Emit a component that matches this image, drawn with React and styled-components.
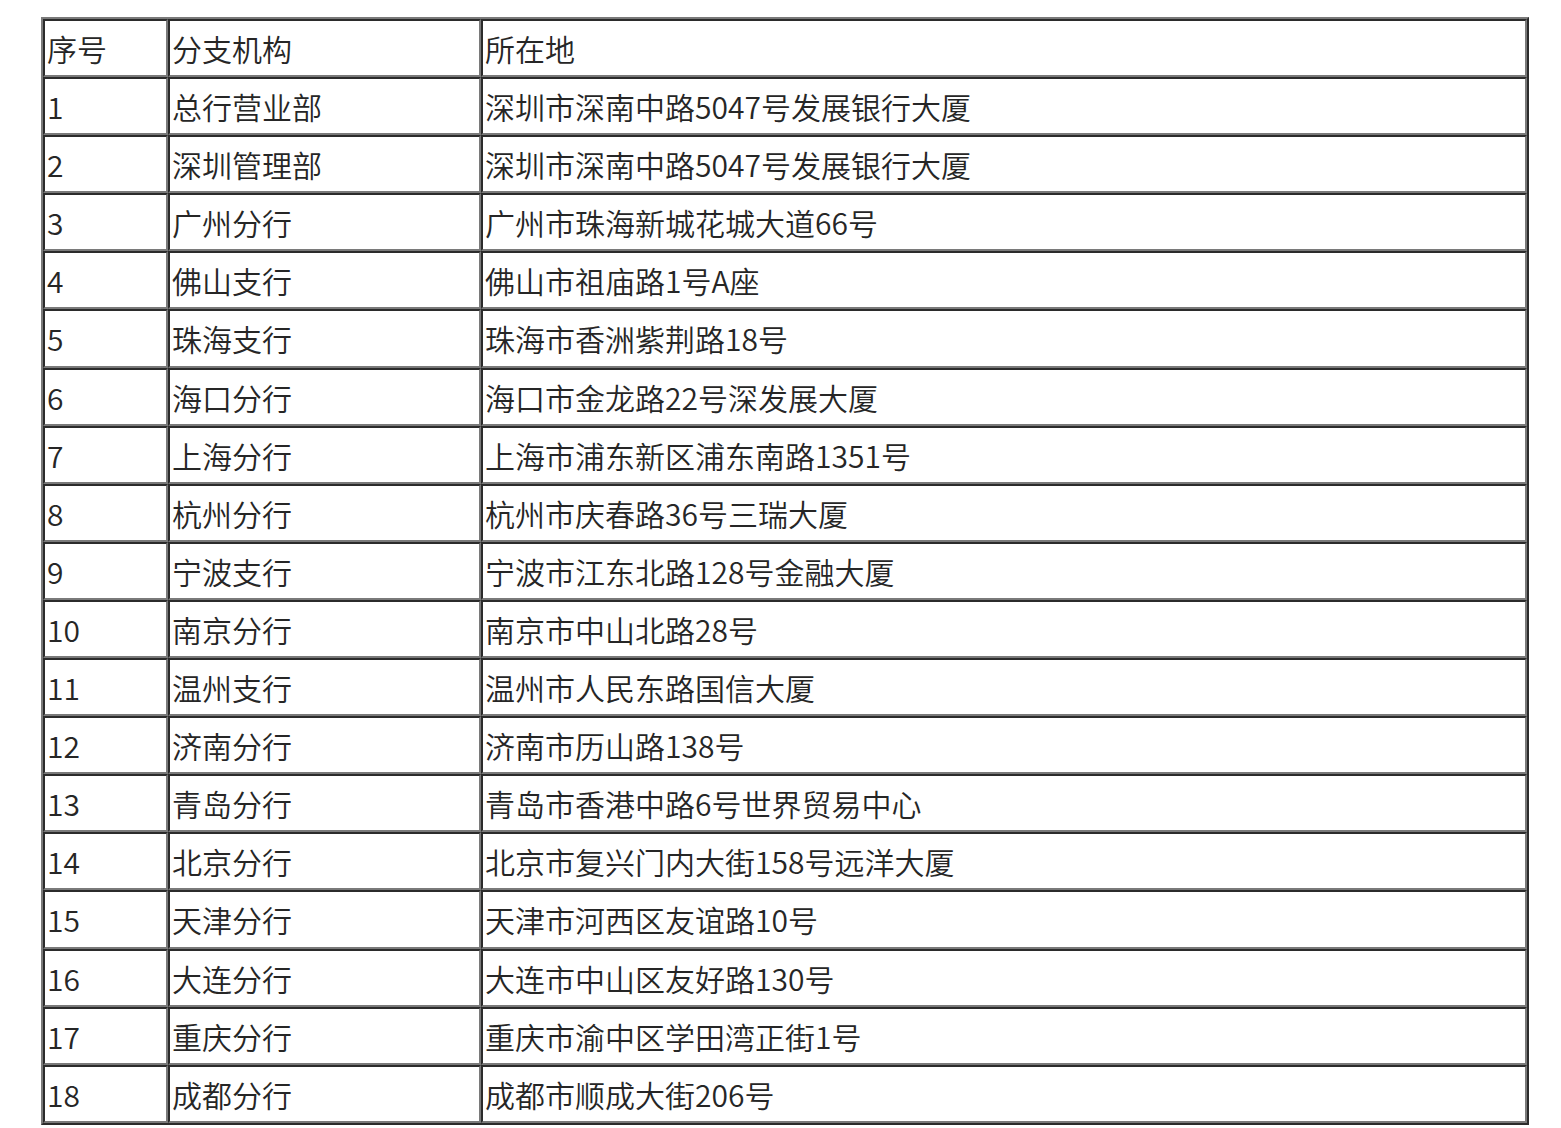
import styled, { createGlobalStyle } from 'styled-components';

const GlobalStyle = createGlobalStyle`
  html, body {
    margin: 0;
    padding: 0;
    background: #fff;
  }
  body {
    font-family: "Noto Sans CJK SC", "Noto Sans", sans-serif;
  }
`;

const Page = styled.div`
  padding: 17px 0 0 41px;
`;

const Table = styled.table`
  box-sizing: border-box;
  width: 1488px;
  table-layout: fixed;
  border-collapse: separate;
  border-spacing: 0;
  border-style: solid;
  border-width: 2px;
  border-color: #7a7a7a #2b2b2b #2b2b2b #7a7a7a;
`;

const Cell = styled.td`
  box-sizing: border-box;
  width: ${props => props.$w ? `${props.$w}px` : 'auto'};
  padding: 0 2px;
  border-style: solid;
  border-width: 2px;
  border-color: #2b2b2b #7a7a7a #7a7a7a #2b2b2b;
  font-size: 30px;
  line-height: 54.1px;
  color: #262626;
  text-align: left;
  vertical-align: middle;
  white-space: nowrap;
  font-weight: 350;
`;

const branches = [
  ['总行营业部', '深圳市深南中路5047号发展银行大厦'],
  ['深圳管理部', '深圳市深南中路5047号发展银行大厦'],
  ['广州分行', '广州市珠海新城花城大道66号'],
  ['佛山支行', '佛山市祖庙路1号A座'],
  ['珠海支行', '珠海市香洲紫荆路18号'],
  ['海口分行', '海口市金龙路22号深发展大厦'],
  ['上海分行', '上海市浦东新区浦东南路1351号'],
  ['杭州分行', '杭州市庆春路36号三瑞大厦'],
  ['宁波支行', '宁波市江东北路128号金融大厦'],
  ['南京分行', '南京市中山北路28号'],
  ['温州支行', '温州市人民东路国信大厦'],
  ['济南分行', '济南市历山路138号'],
  ['青岛分行', '青岛市香港中路6号世界贸易中心'],
  ['北京分行', '北京市复兴门内大街158号远洋大厦'],
  ['天津分行', '天津市河西区友谊路10号'],
  ['大连分行', '大连市中山区友好路130号'],
  ['重庆分行', '重庆市渝中区学田湾正街1号'],
  ['成都分行', '成都市顺成大街206号'],
];

const App = () => (
  <Page>
    <GlobalStyle />
    <Table>
      <tbody>
        <tr>
          <Cell $w={125}>序号</Cell>
          <Cell $w={313}>分支机构</Cell>
          <Cell>所在地</Cell>
        </tr>
        {branches.map(([name, addr], i) => (
          <tr key={name}>
            <Cell $w={125}>{i + 1}</Cell>
            <Cell $w={313}>{name}</Cell>
            <Cell>{addr}</Cell>
          </tr>
        ))}
      </tbody>
    </Table>
  </Page>
);

export default App;
